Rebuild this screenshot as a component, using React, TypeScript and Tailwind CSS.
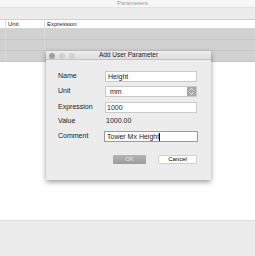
import React from "react";

export default function App() {
  return (
    <div
      className="relative w-[255px] h-[256px] flex flex-col bg-white overflow-hidden"
      style={{ fontFamily: '"Liberation Sans", Arial, sans-serif' }}
    >
      {/* title bar */}
      <div className="h-[7px] bg-[#f6f6f6] flex items-center justify-center pl-[10px] text-[6px] leading-[7px] text-[#9a9a9a]">
        Parameters
      </div>
      {/* toolbar */}
      <div className="h-[13px] bg-[#ececec] border-t border-[#e2e2e2] border-b border-b-[#cfcfcf]" />
      {/* header */}
      <div className="h-[9px] bg-white flex text-[6px] leading-[9px] text-[#222] border-b border-[#d6d6d6]">
        <div className="w-[6px] border-r border-[#e0e0e0]" />
        <div className="w-[39px] pl-[2px] border-r border-[#e0e0e0]">Unit</div>
        <div className="pl-[2px]">Expression</div>
      </div>
      {/* dimmed rows */}
      {[0, 1, 2].map((i) => (
        <div key={i} className="h-[11px] bg-[#d1d1d1] flex border-b border-[#c6c6c6]">
          <div className="w-[6px] border-r border-[#dadada]" />
          <div className="w-[39px] border-r border-[#dadada]" />
        </div>
      ))}
      <div className="flex-1 bg-white" />
      {/* footer */}
      <div className="h-[36px] bg-[#ececec] border-t border-[#dcdcdc]" />

      {/* dialog */}
      <div className="absolute left-[46px] top-[51px] w-[165px] h-[129px] bg-[#ececec] shadow-[0_2px_5px_rgba(0,0,0,0.4)] flex flex-col text-[7px] text-[#1a1a1a]">
        <div className="h-[9px] bg-gradient-to-b from-[#eeeeee] to-[#dddddd] border-b border-[#c4c4c4] relative flex items-center justify-center text-[6.5px] text-[#222]">
          <div className="absolute left-[3px] top-[1.5px] flex gap-[4px]">
            <div className="w-[6px] h-[6px] rounded-full bg-[#a0a0a0]" />
            <div className="w-[6px] h-[6px] rounded-full bg-[#d0d0d0]" />
            <div className="w-[6px] h-[6px] rounded-full bg-[#d0d0d0]" />
          </div>
          Add User Parameter
        </div>
        <div className="flex flex-col pl-[12px]">
          <div className="mt-[11px] h-[11px] flex items-center">
            <div className="w-[47px]">Name</div>
            <div className="w-[92px] h-[11px] bg-white border border-[#c9c9c9] pl-[2px] leading-[9px]">Height</div>
          </div>
          <div className="mt-[4px] h-[11px] flex items-center">
            <div className="w-[47px]">Unit</div>
            <div className="w-[92px] h-[11px] bg-white border border-[#c9c9c9] flex">
              <div className="flex-1 pl-[4px] leading-[9px]">mm</div>
              <div className="w-[9px] h-full bg-[#a9a9a9] flex flex-col items-center justify-center gap-[1px]">
                <svg width="5" height="3" viewBox="0 0 5 3"><path d="M0.5 2.5 L2.5 0.5 L4.5 2.5" stroke="white" strokeWidth="0.8" fill="none" /></svg>
                <svg width="5" height="3" viewBox="0 0 5 3"><path d="M0.5 0.5 L2.5 2.5 L4.5 0.5" stroke="white" strokeWidth="0.8" fill="none" /></svg>
              </div>
            </div>
          </div>
          <div className="mt-[5px] h-[11px] flex items-center">
            <div className="w-[47px]">Expression</div>
            <div className="w-[92px] h-[11px] bg-white border border-[#c9c9c9] pl-[1px] leading-[9px]">1000</div>
          </div>
          <div className="mt-[3px] h-[11px] flex items-center">
            <div className="w-[47px]">Value</div>
            <div className="pl-[1px]">1000.00</div>
          </div>
          <div className="mt-[4px] h-[11px] flex items-center">
            <div className="w-[46px]">Comment</div>
            <div className="w-[94px] h-[11px] bg-white border border-[#9a9a9a] pl-[2px] leading-[9px] flex items-center">
              Tower Mx Height<span className="inline-block w-[1px] h-[8px] bg-black" />
            </div>
          </div>
          <div className="mt-[13px] flex pl-[55px] gap-[12px]">
            <div className="w-[33px] h-[9px] bg-gradient-to-b from-[#b4b4b4] to-[#9c9c9c] rounded-[1px] flex items-center justify-center text-[6px] text-[#e6e6e6]">OK</div>
            <div className="w-[39px] h-[9px] bg-white border border-[#cfcfcf] rounded-[1px] flex items-center justify-center text-[6px] text-black">Cancel</div>
          </div>
        </div>
      </div>
    </div>
  );
}
